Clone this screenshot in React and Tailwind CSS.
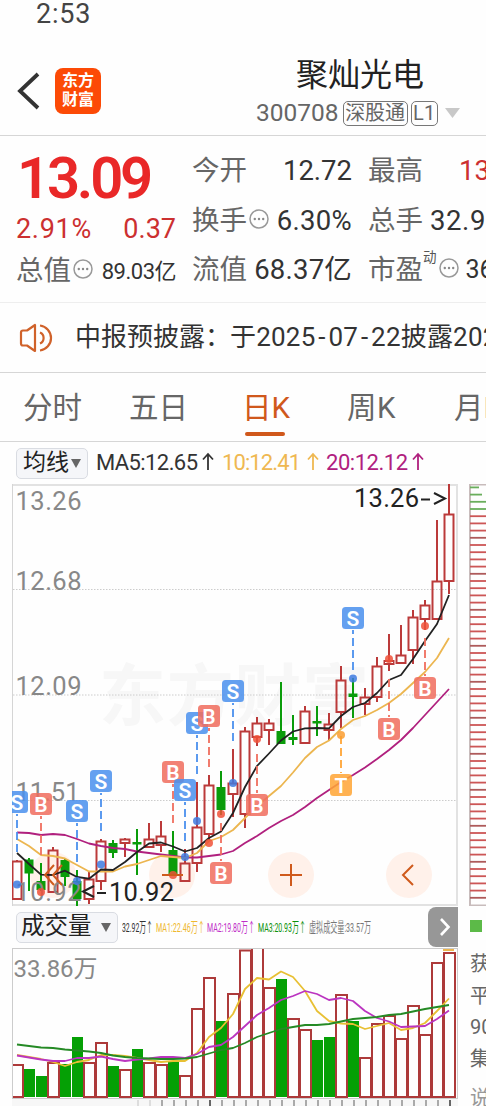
import React from 'react';

const STEP = 12;
const FIRST_X = 17;
const xAt = (i) => FIRST_X + i * STEP;
const toPoints = (values) => values.map((y, i) => `${xAt(i)},${y}`).join(' ');

// [direction, body top, body bottom, high, low]
const CANDLES = [
    ['up', 861, 899, 860, 900], ['down', 859.5, 873.5, 858, 891], ['down', 881, 890, 863, 891],
    ['up', 850, 892, 847, 892], ['down', 860, 877, 859, 886], ['down', 881, 899, 870, 906],
    ['up', 879, 899, 872, 904], ['up', 841, 881, 839, 890], ['down', 843, 853, 840, 858],
    ['up', 839, 843, 838, 857], ['down', 842, 844.5, 829, 875], ['up', 839, 847, 823, 847],
    ['up', 836, 845, 821, 852], ['down', 850, 874, 831, 874], ['up', 863, 881, 849, 882],
    ['up', 827, 863, 782, 872], ['up', 785, 834, 775, 840], ['down', 787, 810, 771, 815],
    ['up', 783, 794, 749, 817], ['up', 731, 814, 727, 828], ['up', 723, 737, 717, 746],
    ['up', 723, 730, 719, 745], ['down', 731, 744, 682, 744], ['down', 737, 740, 715, 745],
    ['up', 711, 743, 706, 744], ['down', 721, 723.5, 706, 736], ['up', 724, 730, 713, 741],
    ['up', 680, 712, 666, 728], ['down', 693.5, 697, 678, 718], ['up', 697, 704, 688, 715],
    ['up', 666, 697, 657, 702], ['up', 660.5, 664, 634, 671], ['up', 655, 663, 625, 664],
    ['up', 617, 650, 610, 664], ['up', 605, 619, 600, 630], ['up', 581, 619, 520, 620],
    ['up', 514, 581, 484, 594],
];

const MA5 = [853, 864, 874.7, 875, 870.7, 877, 878.7, 869.5, 870, 862, 852, 843.5, 842.5, 846.5, 851.5, 848, 838, 831.5, 813, 787, 766, 753.5, 740.5, 731.5, 728.3, 728, 728.3, 716, 707, 703, 693, 680, 675, 659, 641, 624, 595];
const MA10 = [839, 846, 855, 856, 858.5, 865, 871.5, 871.5, 871.5, 866.5, 864, 860, 856, 857, 858, 853, 841, 837, 830, 818, 806, 796, 786, 772.5, 758, 747, 740.5, 729, 720, 716, 710, 703, 694, 683, 672, 658, 638];
const MA20 = [832.5, 833, 835, 834, 835, 839, 843.5, 846, 848, 849, 851.5, 853, 854.5, 856, 857.5, 857.5, 856, 854.5, 851, 843, 836, 828, 821, 815, 807, 798, 790, 782, 775, 767.5, 759, 750, 740, 728, 715, 702, 689];

const COLORS = { S: '#4a90ee', B: '#f06e5e', T: '#ffa535' };
const DOTS = { S: '#3e7ae0', B: '#f05138', T: '#fa9e30' };

// [kind, candle index, badge y, dot y]
const MARKERS = [
    ['S', 0, 802, 884.5], ['B', 2, 804, 892], ['S', 5, 811, 881], ['S', 7, 781, 864.5],
    ['B', 13, 772, 875], ['S', 14, 790, 857], ['S', 15, 723, 821], ['B', 16, 716, 843],
    ['S', 18, 691, 783], ['B', 17, 873, 814], ['B', 20, 805, 739], ['T', 27, 785, 735],
    ['B', 31, 729, 659], ['S', 28, 618, 678.5], ['B', 34, 688, 626],
];

const VOLUMES = [
    ['up', 1064], ['down', 1069], ['down', 1076], ['up', 1062], ['down', 1064], ['down', 1037],
    ['up', 1062], ['up', 1042], ['down', 1066], ['up', 1069], ['down', 1049], ['up', 1062],
    ['up', 1064], ['down', 1062], ['up', 1075], ['up', 1008], ['up', 977], ['down', 1021],
    ['up', 993], ['up', 949.5], ['up', 940], ['up', 987], ['down', 979], ['up', 1018],
    ['up', 1029], ['down', 1040], ['down', 1037], ['up', 994], ['down', 1021], ['up', 1057],
    ['up', 1023], ['up', 1015], ['up', 1038], ['up', 1005], ['up', 1034], ['up', 962],
    ['up', 952],
];
const VMA1 = [1055, 1057, 1059, 1062, 1066, 1062, 1060, 1055, 1055, 1056, 1058, 1060, 1062, 1061, 1061, 1053, 1037, 1028, 1014, 989, 978, 979.5, 971.5, 977, 991, 1011, 1021, 1023.5, 1024, 1029, 1026, 1023, 1030, 1028, 1023, 1011, 998.5];
const VMA2 = [1055.5, 1057.5, 1059.5, 1061, 1061, 1058, 1058, 1056.5, 1059, 1061, 1059.5, 1058.5, 1057, 1057, 1058, 1054, 1047, 1045, 1037, 1026, 1015, 1008, 1000, 996, 991, 994, 1000, 998, 1001, 1011, 1018, 1021.5, 1027, 1026.5, 1026, 1019, 1010.5];
const VMA3 = [1044.5, 1046, 1047.5, 1048, 1049.5, 1050.5, 1051.5, 1053, 1055.5, 1057, 1058, 1058.5, 1059, 1059, 1058.5, 1057, 1053.5, 1050, 1048, 1043, 1037, 1033, 1029, 1027, 1025, 1025, 1024, 1021.5, 1019, 1018, 1017, 1015, 1014, 1011.5, 1009, 1007, 1005];

const MoreDot = () => (
    <svg viewBox="0 0 20 20" className="w-5 h-5 ml-[2px] mb-[4px] shrink-0">
        <circle cx="10" cy="10" r="9" fill="none" stroke="#999" strokeWidth="1.5" />
        <circle cx="5.8" cy="10" r="1.2" fill="#888" />
        <circle cx="10" cy="10" r="1.2" fill="#888" />
        <circle cx="14.2" cy="10" r="1.2" fill="#888" />
    </svg>
);

const Header = () => (
    <header className="h-[136px] border-b border-[#d6d6d6]">
        <div className="h-[30px] pl-9 text-[27px] leading-[28px] tracking-[0.8px] text-[#444]">2:53</div>
        <div className="flex h-[105px] pt-[27px]">
            <svg viewBox="0 0 24 40" className="w-6 h-10 ml-4 mt-[14px]">
                <path d="M22 3 L4 20 L22 37" fill="none" stroke="#333" strokeWidth="3.8" />
            </svg>
            <div className="ml-[15px] mt-[11px] w-[46px] h-[46px] rounded-[8px] bg-[#fc4a06] text-white text-[16px] leading-[19px] font-bold text-center pt-[3px]">
                <div>东方</div>
                <div>财富</div>
            </div>
            <div className="ml-[155px] w-[206px]">
                <div className="pl-[40px] text-[32px] leading-[36px] text-[#222]">聚灿光电</div>
                <div className="flex items-center mt-[4px] h-[32px] text-[#666]">
                    <span className="text-[24.5px] leading-none">300708</span>
                    <span className="ml-[4px] w-[65px] h-[25px] rounded-[5px] border border-[#777] text-[20px] leading-[22px] text-center whitespace-nowrap">深股通</span>
                    <span className="ml-[3px] w-[27px] h-[25px] rounded-[5px] border border-[#777] text-[20px] leading-[23px] text-center">L1</span>
                    <svg viewBox="0 0 15 10" className="w-[15px] h-[10px] ml-[7px]">
                        <path d="M0 0 H15 L7.5 10 Z" fill="#c8c8c8" />
                    </svg>
                </div>
            </div>
        </div>
    </header>
);

const Quote = () => (
    <section className="flex gap-4 h-[167px] pl-4 overflow-hidden border-b border-[#eee] text-[27.5px] text-[#666] whitespace-nowrap">
        <div className="w-[160px] shrink-0">
            <div className="h-[71px] pt-[9px] pl-[1px] text-[58px] leading-[66px] font-semibold tracking-[-3.2px] text-[#e92828]">13.09</div>
            <div className="flex justify-between h-[44px] text-[27px] leading-[44px] text-[#cc3030]">
                <span className="tracking-[0.7px]">2.91%</span>
                <span>0.37</span>
            </div>
            <div className="flex items-center h-[40px]">
                <span>总值</span>
                <MoreDot />
                <span className="ml-auto text-[22px] tracking-[-0.5px] text-[#333]">89.03亿</span>
            </div>
        </div>
        <div className="w-[160px] shrink-0 pt-[10px] text-[#333]">
            <div className="flex items-center justify-between h-[50px]">
                <span className="text-[#666]">今开</span>
                <span>12.72</span>
            </div>
            <div className="flex items-center h-[50px]">
                <span className="text-[#666]">换手</span>
                <MoreDot />
                <span className="ml-auto tracking-[0.3px]">6.30%</span>
            </div>
            <div className="flex items-center justify-between h-[48px]">
                <span className="text-[#666]">流值</span>
                <span className="tracking-[0.2px]">68.37亿</span>
            </div>
        </div>
        <div className="w-[160px] shrink-0 pt-[10px] text-[#333]">
            <div className="flex items-center h-[50px]">
                <span className="text-[#666]">最高</span>
                <span className="ml-[36px] text-[#cc3030]">13.26</span>
            </div>
            <div className="flex items-center h-[50px]">
                <span className="text-[#666]">总手</span>
                <span className="ml-[7px] tracking-[0.6px]">32.92万</span>
            </div>
            <div className="flex items-center h-[48px]">
                <span className="text-[#666]">市盈</span>
                <span className="self-start text-[13.5px] leading-[22px] text-[#555]">动</span>
                <MoreDot />
                <span className="ml-[7px] text-[25px]">36.57</span>
            </div>
        </div>
    </section>
);

const News = () => (
    <section className="flex items-center h-[70px] pl-[17px] border-b border-[#d6d6d6] overflow-hidden whitespace-nowrap">
        <svg viewBox="0 0 36 30" className="w-9 h-[30px] shrink-0" fill="none" stroke="#d0622a" strokeWidth="2.2">
            <path d="M18 2 V28 L10 22.5 H6 Q4 22.5 4 20.5 V9.500 Q4 7.500 6 7.500 H10 Z" strokeLinejoin="round" />
            <path d="M23 9.500 A6 6 0 0 1 23 20.500" />
            <path d="M23 2.500 A12.600 12.600 0 0 1 23 27.500" />
        </svg>
        <span className="ml-[22px] text-[26px] text-[#333]">中报预披露：</span>
        <span className="ml-[-1px] text-[26px] tracking-[0.2px] text-[#333]">于2025<span className="inline-block w-[13px] text-center">-</span>07<span className="inline-block w-[13px] text-center">-</span>22披露2025年中报</span>
    </section>
);

const Tabs = () => (
    <nav className="flex h-[69px] pt-[15px] border-b border-[#d6d6d6] overflow-hidden whitespace-nowrap text-[29.5px] leading-[41px] text-[#666]">
        <span className="shrink-0 w-[106px] pl-[23px]">分时</span>
        <span className="shrink-0 w-[112px] pl-[23px]">五日</span>
        <span className="shrink-0 w-[106px] pl-[24px] text-[#d0581c]">
            日K
            <span className="block ml-[3px] mt-[3px] w-10 h-1 rounded-full bg-[#d0581c]" />
        </span>
        <span className="shrink-0 w-[107px] pl-[23px] tracking-[0.6px]">周K</span>
        <span className="shrink-0 pl-[23px]">月K</span>
    </nav>
);

const Averages = () => (
    <div className="flex items-center h-[42px] pl-4 text-[22.5px] whitespace-nowrap">
        <div className="flex items-center w-[72px] h-[31px] mt-[1px] pl-[6px] rounded-[5px] border border-[#d9dce2] bg-[#f5f6f9] text-[23px] text-[#222]">
            均线
            <svg viewBox="0 0 10 9" className="w-[10px] h-[9px] ml-[2px]">
                <path d="M0 0 H10 L5 9 Z" fill="#666" />
            </svg>
        </div>
        <svg viewBox="0 0 340 30" className="w-[340px] h-[30px] ml-[8px]" fontSize="22">
            <text x="0" y="22" fill="#333" textLength="102">MA5:12.65</text>
            <text x="126" y="22" fill="#efb851" textLength="79">10:12.41</text>
            <text x="230" y="22" fill="#b0207e" textLength="82">20:12.12</text>
            <g fill="none" strokeWidth="1.8">
                <path d="M112 22 V6 M107 11.500 L112 6 L117 11.500" stroke="#333" />
                <path d="M217 22 V6 M212 11.500 L217 6 L222 11.500" stroke="#efb851" />
                <path d="M322 22 V6 M317 11.500 L322 6 L327 11.500" stroke="#b0207e" />
            </g>
        </svg>
    </div>
);

const Candle = ({ x, data }) => {
    const [dir, top, bottom, high, low] = data;
    if (dir === 'down') {
        return (
            <g fill="#0a9c0a">
                <rect x={x - 1} y={high} width="2" height={low - high} />
                <rect x={x - 4.5} y={top} width="9" height={bottom - top} />
            </g>
        );
    }
    return (
        <g stroke="#bb3a3a" strokeWidth="2" fill="none">
            <path d={`M${x} ${high} V${top} M${x} ${bottom} V${low}`} />
            <rect x={x - 4.5} y={top + 0.5} width="9" height={Math.max(bottom - top - 0.5, 1)} />
        </g>
    );
};

const Marker = ({ kind, index, y, dotY }) => {
    const x = xAt(index);
    const [, , , high, low] = CANDLES[index];
    // the leader stops a little short of the wick
    const line = dotY > y ? `M${x} ${high - 8} V${y + 12}` : `M${x} ${low + 8} V${y - 12}`;
    return (
        <g>
            <path d={line} stroke={COLORS[kind]} strokeWidth="1.8" strokeDasharray="8 4" />
            <circle cx={x} cy={dotY} r="4" fill={DOTS[kind]} opacity="0.85" />
            <rect x={x - 11} y={y - 11} width="22" height="22" rx="3.500" fill={COLORS[kind]} opacity="0.86" />
            <text x={x} y={y + 7.5} fontSize="21" fontWeight="600" textAnchor="middle" fill="#fff">{kind}</text>
        </g>
    );
};

const KLine = () => (
    <svg viewBox="12 484 446 422" className="block w-[446px] h-[422px]">
        <path d="M12 485 H457 V905 H12" fill="none" stroke="#e2e2e2" strokeWidth="2" />
        <path d="M12.500 484 V906" stroke="#d5d5d5" />
        <text x="99" y="720" fontSize="67" fontWeight="700" fill="#f7f7f7" textLength="270">东方财富</text>
        <path d="M13 589.500 H457 M13 695 H457 M13 800.500 H457" stroke="#ccc" strokeDasharray="1.500 1.500" />
        <g fill="#fff1ea">
            <circle cx="53" cy="875" r="23" />
            <circle cx="172" cy="875" r="23" />
            <circle cx="291" cy="875" r="23" />
            <circle cx="409" cy="875" r="23" />
        </g>
        {CANDLES.map((c, i) => <Candle key={i} x={xAt(i)} data={c} />)}
        <g fill="#888" fontSize="25.500">
            <text x="15.500" y="510" textLength="66">13.26</text>
            <text x="15.500" y="590" textLength="66">12.68</text>
            <text x="15.500" y="695" textLength="66">12.09</text>
            <text x="15.500" y="801" textLength="64">11.51</text>
            <text x="15.500" y="901" textLength="66">10.92</text>
        </g>
        <g fill="none" strokeWidth="1.800" strokeLinejoin="round">
            <polyline points={toPoints(MA20)} stroke="#b0207e" />
            <polyline points={toPoints(MA10)} stroke="#ecb650" />
            <polyline points={toPoints(MA5)} stroke="#222" />
        </g>
        {MARKERS.map(([kind, index, y, dotY]) => (
            <Marker key={kind + index} kind={kind} index={index} y={y} dotY={dotY} />
        ))}
        <g fill="none" stroke="#cf5a1c" strokeWidth="2">
            <path d="M162 875 H183 M280 875 H302 M291 864 V886 M413 865 L403 875 L413 885" />
            <path d="M54 865 L45 875 L54 885 M62 865 L53 875 L62 885" />
        </g>
        <g fill="#222" fontSize="25.500">
            <text x="354" y="507" textLength="65">13.26</text>
            <text x="109" y="901" textLength="65">10.92</text>
        </g>
        <g fill="none" stroke="#222" strokeWidth="2">
            <path d="M421 499.500 H430 M434 493 L445 498.500 L434 504" />
            <path d="M97 893 H106 M94 886 L83 891.500 L94 897" />
        </g>
    </svg>
);

const VolumeHeader = () => (
    <div className="flex items-center h-[42px] pl-1 whitespace-nowrap">
        <div className="flex items-center w-[102px] h-[31px] pl-[4px] rounded-[5px] border border-[#d9dce2] bg-[#f5f6f9] text-[23.5px] text-[#222]">
            成交量
            <svg viewBox="0 0 10 9" className="w-[10px] h-[9px] ml-[9px]">
                <path d="M0 0 H10 L5 9 Z" fill="#666" />
            </svg>
        </div>
        <svg viewBox="122 0 254 20" className="w-[254px] h-5 ml-[4px]" fontSize="13.500">
            <text x="122" y="15" fill="#333" textLength="31" lengthAdjust="spacingAndGlyphs">32.92万↑</text>
            <text x="156" y="15" fill="#efb92f" textLength="49" lengthAdjust="spacingAndGlyphs">MA1:22.46万↑</text>
            <text x="207" y="15" fill="#c02fc8" textLength="48" lengthAdjust="spacingAndGlyphs">MA2:19.80万↑</text>
            <text x="258" y="15" fill="#0a900a" textLength="48" lengthAdjust="spacingAndGlyphs">MA3:20.93万↑</text>
            <text x="309" y="15" fill="#777" textLength="62" lengthAdjust="spacingAndGlyphs">虚拟成交量:33.57万</text>
        </svg>
        <div className="flex items-center justify-center ml-auto w-[30px] h-10 rounded-l-[8px] bg-[#979797]">
            <svg viewBox="0 0 12 18" className="w-3 h-[18px] ml-[3px]">
                <path d="M2 1 L9.500 9 L2 17" fill="none" stroke="#fff" strokeWidth="2.600" />
            </svg>
        </div>
    </div>
);

const Volume = () => (
    <svg viewBox="12 948 446 158" className="block w-[446px] h-[158px]">
        <rect x="12" y="1099" width="446" height="7" fill="#f7f7f7" />
        <text x="13.500" y="977" fontSize="24" fill="#888" textLength="84">33.86万</text>
        <svg x="13" y="949" width="445" height="149" viewBox="13 949 445 149">
            {VOLUMES.map(([dir, top], i) => (
                dir === 'up'
                    ? <rect key={i} x={xAt(i) - 5} y={top + 1} width="11" height={1096 - top} fill="#fff" stroke="#ad3a3a" strokeWidth="2" />
                    : <rect key={i} x={xAt(i) - 5} y={top} width="11" height={1097 - top} fill="#05a005" />
            ))}
            <path d="M443 950 H454" stroke="#ecb650" strokeWidth="2" />
            <g fill="none" strokeWidth="1.800" strokeLinejoin="round">
                <polyline points={toPoints(VMA1)} stroke="#e8c034" />
                <polyline points={toPoints(VMA2)} stroke="#bb35c0" />
                <polyline points={toPoints(VMA3)} stroke="#258a25" />
            </g>
        </svg>
        <rect x="12.500" y="948.500" width="445" height="150" fill="none" stroke="#ccc" />
        {Array.from({ length: 27 }, (_, i) => (
            <rect
                key={i}
                x={137 + i * STEP}
                y="1100"
                width="2"
                height="6"
                fill={i === 6 || i === 26 ? '#666' : i < 2 ? '#ddd' : '#aaa'}
            />
        ))}
    </svg>
);

const SidePanel = () => (
    <aside className="w-[17px] h-[622px] overflow-hidden whitespace-nowrap">
        <svg viewBox="469 484 17 422" className="block w-[17px] h-[422px]">
            <path d="M486 484.500 H470 V905.500 H486" fill="none" stroke="#c8bcbc" strokeWidth="2" />
            {Array.from({ length: 58 }, (_, i) => (
                <rect
                    key={i}
                    x="470"
                    y={486.5 + i * 7.2}
                    width={i === 0 ? 9 : i === 1 ? 12 : 16}
                    height="1.800"
                    fill={i < 4 ? '#6aae5c' : i % 5 === 2 ? '#ae5a5a' : '#cc5656'}
                />
            ))}
        </svg>
        <div className="mt-[14px] ml-[1px] w-3 h-3 bg-[#5cba48]" />
        <div className="mt-[17px] ml-[1px] text-[20px] leading-[31.5px] text-[#666]">
            <div>获利</div>
            <div>平均</div>
            <div>90%</div>
            <div>集中</div>
            <div className="mt-[8px] text-[#999]">说明</div>
        </div>
    </aside>
);

const App = () => {
    return (
        <div className="w-[486px] h-[1106px] overflow-hidden bg-[#fefefe] font-[Roboto,'Noto_Sans_CJK_SC',sans-serif]">
            <Header />
            <Quote />
            <News />
            <Tabs />
            <Averages />
            <div className="flex justify-between h-[622px] pl-3">
                <div className="w-[446px]">
                    <KLine />
                    <VolumeHeader />
                    <Volume />
                </div>
                <SidePanel />
            </div>
        </div>
    );
};

export default App;
